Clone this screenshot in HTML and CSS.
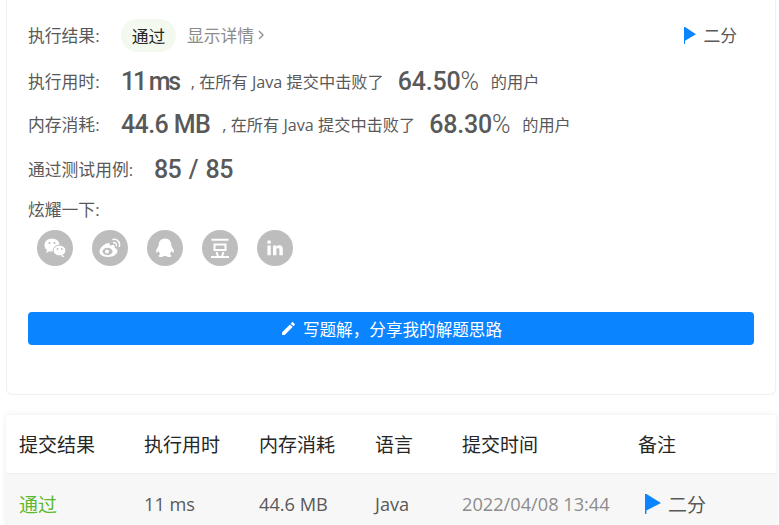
FILE: index.html
```html
<!DOCTYPE html>
<html lang="zh-CN">
<head>
<meta charset="utf-8">
<title>提交详情</title>
<link rel="stylesheet" href="styles.css">
</head>
<body>
<div class="page">
  <section class="card">
    <div class="row row-result">
      <span class="label">执行结果:</span>
      <span class="pill">通过</span>
      <span class="details">显示详情<svg class="chev" width="6" height="10" viewBox="0 0 6 10"><path d="M1 1l4 4-4 4" fill="none" stroke="currentColor" stroke-width="1.3"/></svg></span>
      <span class="mark"><svg class="flag" width="12" height="17" viewBox="0 0 12 17"><path d="M0 0h1L12 7.300 1 13.800V17H0z" fill="#0a84ff"/></svg><span>二分</span></span>
    </div>
    <div class="row row-time">
      <span class="label">执行用时:</span>
      <b class="num tight">11 ms</b>
      <span class="desc">, 在所有 Java 提交中击败了</span>
      <b class="num pct">64.50<i>%</i></b>
      <span class="desc">的用户</span>
    </div>
    <div class="row row-mem">
      <span class="label">内存消耗:</span>
      <b class="num">44.6 MB</b>
      <span class="desc">, 在所有 Java 提交中击败了</span>
      <b class="num pct">68.30<i>%</i></b>
      <span class="desc">的用户</span>
    </div>
    <div class="row row-cases">
      <span class="label">通过测试用例:</span>
      <b class="num wide">85 / 85</b>
    </div>
    <div class="share-label">炫耀一下:</div>
    <div class="share">
      <span class="soc"><svg width="36" height="36" viewBox="0 0 36 36"><ellipse cx="15" cy="15" rx="7.600" ry="6.600" fill="#fff"/><path d="M10 20l-1 3 4-2z" fill="#fff"/><ellipse cx="22.500" cy="20.500" rx="6.400" ry="5.400" fill="#fff" stroke="#bdbdbd" stroke-width="1"/><path d="M26 25l1.500 2.500-4-1.500z" fill="#fff"/><circle cx="12.500" cy="13" r="1.100" fill="#bdbdbd"/><circle cx="17.500" cy="13" r="1.100" fill="#bdbdbd"/><circle cx="20.500" cy="19" r=".9" fill="#bdbdbd"/><circle cx="24.800" cy="19" r=".9" fill="#bdbdbd"/></svg></span>
      <span class="soc"><svg width="36" height="36" viewBox="0 0 36 36"><path d="M16 13c-4 1-8.500 5-8.500 8.500 0 3.500 4 5.500 8.500 5.500 5.500 0 9.500-3 9.500-6 0-2-2-2.800-3-3 .6-1.800 0-3-1.500-3-1.500 0-3 .8-3 .8s.5-3.300-2-2.800z" fill="#fff"/><ellipse cx="15.500" cy="21.500" rx="5" ry="3.700" fill="#bdbdbd"/><circle cx="15" cy="21.500" r="2" fill="#fff"/><path d="M21 9.500c4-.8 7.500 2.500 6.300 6.800M21.500 12.700c2-.4 3.300 1.200 2.800 3" fill="none" stroke="#fff" stroke-width="1.500" stroke-linecap="round"/></svg></span>
      <span class="soc"><svg width="36" height="36" viewBox="0 0 36 36"><path d="M18 8.500c-4.200 0-6.300 3-6.300 6.500 0 1-.4 1.600-1.200 2.700-1.300 2-1.800 4.400-1 4.900.6.300 1.400-.5 2.100-1.500.3 1.300 1 2.400 1.800 3.200-1.300.5-2.100 1.200-1.800 1.900.5 1 3.100.9 4.600.2.500-.3.900-.3 1.800-.3s1.300 0 1.800.3c1.500.7 4.100.8 4.600-.2.300-.7-.5-1.400-1.800-1.900.8-.8 1.500-1.900 1.800-3.200.7 1 1.500 1.800 2.100 1.500.8-.5.3-2.900-1-4.900-.8-1.100-1.200-1.700-1.200-2.700 0-3.500-2.100-6.500-6.300-6.500z" fill="#fff"/></svg></span>
      <span class="soc"><svg width="36" height="36" viewBox="0 0 36 36"><path d="M9.500 9.800h17M12.500 14.500h11v5.500h-11zM14.500 22l1.500 4.500M21.500 22L20 26.500M9 27h18" fill="none" stroke="#fff" stroke-width="2"/></svg></span>
      <span class="soc"><svg width="36" height="36" viewBox="0 0 36 36"><circle cx="12.100" cy="12.100" r="1.900" fill="#fff"/><path d="M10.400 15.400h3.400v9.900h-3.400zM16 15.400h3.200v1.400c.6-1 1.700-1.600 3-1.600 2.500 0 3.600 1.500 3.600 4v6.100h-3.400v-5.300c0-1.300-.4-2.100-1.500-2.100s-1.500.8-1.500 2.100v5.300H16z" fill="#fff"/></svg></span>
    </div>
    <button class="btn" type="button"><svg width="17" height="17" viewBox="0 0 24 24"><path d="M3 17.250V21h3.750L17.810 9.940l-3.750-3.750L3 17.250zM20.710 7.040a1 1 0 0 0 0-1.410l-2.340-2.340a1 1 0 0 0-1.410 0l-1.830 1.830 3.750 3.750 1.830-1.830z" fill="#fff"/></svg><span>写题解，分享我的解题思路</span></button>
  </section>
  <table class="subs">
    <colgroup><col class="c1"><col class="c2"><col class="c3"><col class="c4"><col class="c5"><col></colgroup>
    <thead>
      <tr><th>提交结果</th><th>执行用时</th><th>内存消耗</th><th>语言</th><th>提交时间</th><th>备注</th></tr>
    </thead>
    <tbody>
      <tr>
        <td class="ok">通过</td><td>11 ms</td><td>44.6 MB</td><td>Java</td><td class="time">2022/04/08 13:44</td>
        <td><span class="mark mark-cell"><svg class="flag" width="16" height="20" viewBox="0 0 16 20"><path d="M0 0h1.400L16 9 1.400 16.500V20H0z" fill="#0a84ff"/></svg><span>二分</span></span></td>
      </tr>
    </tbody>
  </table>
</div>
</body>
</html>
```
FILE: styles.css
```css
* { box-sizing: border-box; }
html, body { margin: 0; height: 525px; overflow: hidden; background: #fff; }
body {
  font-family: "Open Sans", "Noto Sans CJK SC", sans-serif;
  font-size: 16.8px;
  color: #595959;
}
.page { padding: 0 3px 0 6px; }
.card {
  height: 395px;
  padding: 19px 21px 0 21px;
  border: 1px solid #f0f0f0;
  border-top: 0;
  border-radius: 0 0 6px 6px;
}
.row { display: flex; align-items: center; white-space: nowrap; }
.row-result { height: 33px; }
.row-result .label, .details, .row-result .mark { margin-bottom: 2px; }
.row-result .flag { margin-top: 2px; margin-left: 1px; }
.row-result .mark { gap: 7px; }
.row-time { height: 36px; margin-top: 11px; }
.row-mem { height: 36px; margin-top: 7px; }
.row-cases { height: 36px; margin-top: 9px; }
.label { width: 93px; flex: none; }
.row-cases .label { width: 126px; }
.pill {
  display: flex; align-items: center; justify-content: center;
  width: 55px; height: 33px;
  border-radius: 17px;
  background: #f4f9f0;
  color: #262626;
}
.details { display: flex; align-items: center; gap: 4px; margin-left: 11px; color: #8c8c8c; }
.mark { display: flex; align-items: center; gap: 8px; margin-left: auto; margin-right: 17px; }
.flag { display: block; }
.num {
  font-family: Roboto, sans-serif;
  font-size: 25px;
  font-stretch: 88%;
  font-weight: 500;
  letter-spacing: -.6px;
  color: #595959;
}
.num.pct { letter-spacing: -.2px; margin-left: 14px; }
.num.tight { letter-spacing: -2.300px; }
.num.wide { word-spacing: 2px; }
.num i { font-style: normal; font-weight: 300; }
.desc { font-size: 16.200px; margin-left: 12px; }
.share-label { margin-top: 11px; height: 24px; line-height: 24px; }
.share { display: flex; gap: 19px; margin-top: 8px; padding-left: 9px; }
.soc { display: block; width: 36px; height: 36px; border-radius: 50%; background: #bdbdbd; }
.soc svg { display: block; }
.btn {
  display: flex; align-items: center; justify-content: center; gap: 6px;
  width: 100%; height: 33px; margin-top: 46px; padding: 0;
  border: 0; border-radius: 4px;
  background: #0a84ff; color: #fff;
  font: inherit;
  font-size: 16.600px;
}
.subs {
  width: 770px;
  margin-top: 20px;
  border-collapse: collapse;
  table-layout: fixed;
  box-shadow: 0 0 6px rgba(0,0,0,.08);
}
.c1 { width: 125px; } .c2 { width: 115px; } .c3 { width: 116px; } .c4 { width: 87px; } .c5 { width: 176px; }
.subs th { height: 58px; padding: 0 0 0 13px; font-size: 19px; font-weight: 400; color: #262626; text-align: left; border-bottom: 1px solid #f0f0f0; }
.subs td { height: 62px; padding: 0 0 0 13px; background: #f7f7f7; font-size: 18.200px; color: #595959; }
.subs td.ok { color: #5cb82c; font-size: 19px; }
.subs td.time { color: #8c8c8c; }
.mark-cell { margin: 0 0 0 7px; font-size: 19px; gap: 7px; }
```
